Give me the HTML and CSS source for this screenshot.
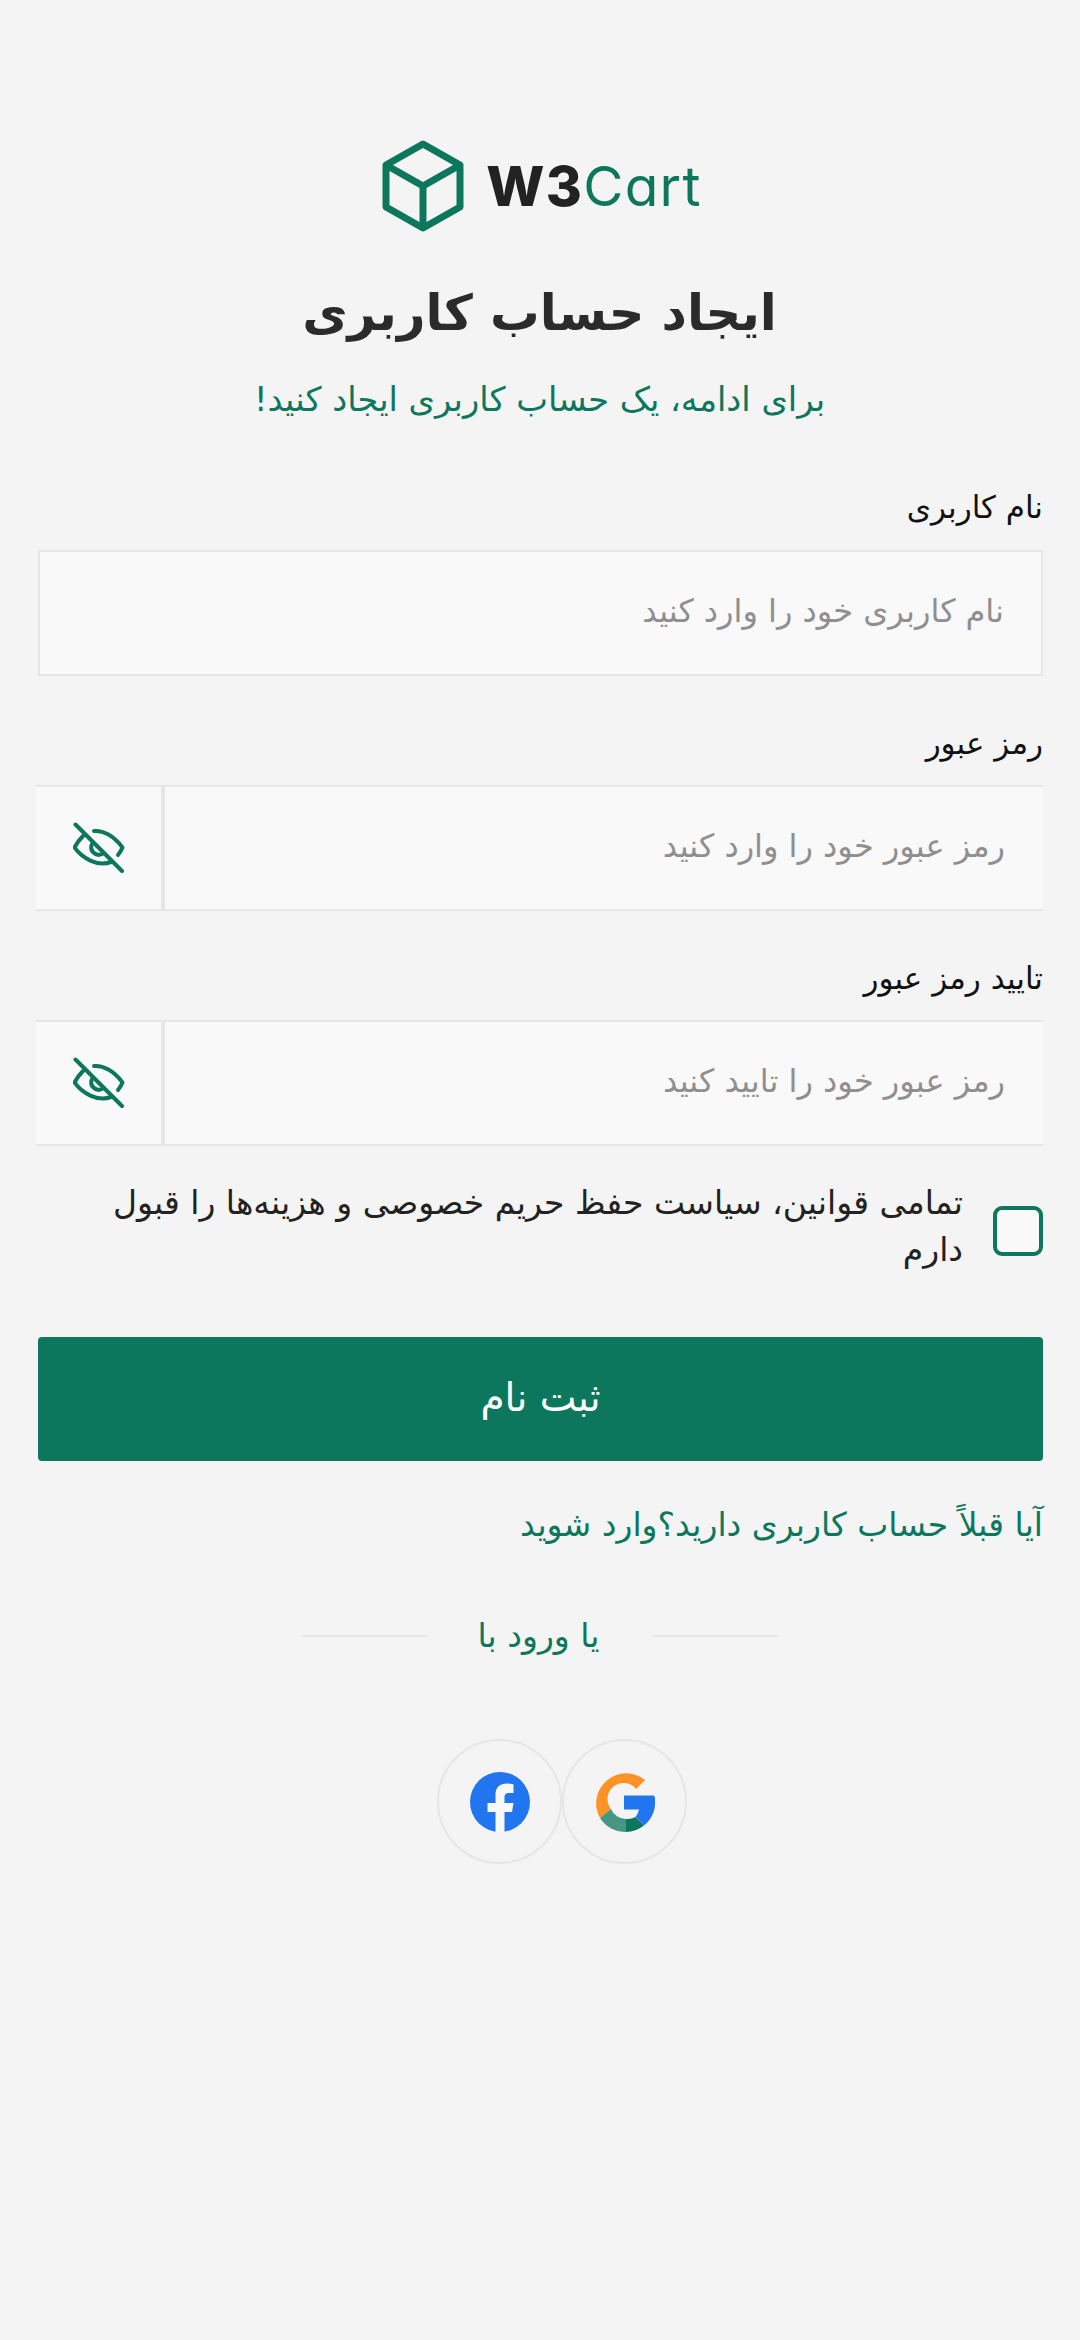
FILE: index.html
```html
<!DOCTYPE html>
<html lang="fa" dir="rtl">
<head>
    <meta charset="UTF-8">
    <meta name="viewport" content="width=device-width, initial-scale=1.0">
    <title>ایجاد حساب کاربری</title>
    <link rel="stylesheet" href="styles.css">
</head>
<body>
    <div class="page">
        <div class="logo" dir="ltr">
            <svg class="logo-box" viewBox="0 0 84 92" width="84" height="92">
                <path d="M42 4 L79 25 V67 L42 88 L5 67 V25 Z M5 25 L42 46 L79 25 M42 46 V88" fill="none" stroke="#0d775d" stroke-width="7" stroke-linejoin="round"/>
            </svg>
            <span class="logo-text"><b>W3</b>Cart</span>
        </div>

        <h1>ایجاد حساب کاربری</h1>
        <p class="subtitle">برای ادامه، یک حساب کاربری ایجاد کنید!</p>

        <label class="field-label first">نام کاربری</label>
        <input class="input solo" type="text" placeholder="نام کاربری خود را وارد کنید">

        <label class="field-label">رمز عبور</label>
        <div class="input-group">
            <input class="input" type="password" placeholder="رمز عبور خود را وارد کنید">
            <button class="eye-btn" type="button">
                <svg viewBox="0 0 52 52" width="52" height="52" fill="none" stroke="#0d775d" stroke-width="4" stroke-linecap="round" stroke-linejoin="round">
                    <path d="M21 9 C30 8 41 14 49.5 25.5 C48.5 28 47 30.5 45 33"/>
                    <path d="M10 14 C7 17 4 21 1.5 25.5 C9 36 24 45 38 40"/>
                    <path d="M19 22 A7.5 7.5 0 0 0 29 32"/>
                    <path d="M2.5 2.5 L49 49"/>
                </svg>
            </button>
        </div>

        <label class="field-label">تایید رمز عبور</label>
        <div class="input-group">
            <input class="input" type="password" placeholder="رمز عبور خود را تایید کنید">
            <button class="eye-btn" type="button">
                <svg viewBox="0 0 52 52" width="52" height="52" fill="none" stroke="#0d775d" stroke-width="4" stroke-linecap="round" stroke-linejoin="round">
                    <path d="M21 9 C30 8 41 14 49.5 25.5 C48.5 28 47 30.5 45 33"/>
                    <path d="M10 14 C7 17 4 21 1.5 25.5 C9 36 24 45 38 40"/>
                    <path d="M19 22 A7.5 7.5 0 0 0 29 32"/>
                    <path d="M2.5 2.5 L49 49"/>
                </svg>
            </button>
        </div>

        <div class="terms">
            <span class="checkbox"></span>
            <span class="terms-text">تمامی قوانین، سیاست حفظ حریم خصوصی و هزینه‌ها را قبول دارم</span>
        </div>

        <button class="submit" type="button">ثبت نام</button>

        <p class="login-link">آیا قبلاً حساب کاربری دارید؟وارد شوید</p>

        <div class="divider"><span>یا ورود با</span></div>

        <div class="socials">
            <div class="social">
                <svg viewBox="0 0 60 60" width="60" height="60">
                    <path d="M50 8 A30 30 0 0 0 5 46 L16 37 A15.5 15.5 0 0 1 41 17 Z" fill="#fd9326"/>
                    <path d="M5 46 A30 30 0 0 0 31 60 V47 A16 16 0 0 1 16 37 Z" fill="#459685"/>
                    <path d="M31 60 A30 30 0 0 0 49 53.5 L40.5 45 A16 16 0 0 1 31 47 Z" fill="#0d775d"/>
                    <path d="M29 23.5 H58 Q60 23.5 60 27 A30 30 0 0 1 49 53.5 L40.5 45 Q43 42 44 37.5 H29 Z" fill="#2176f0"/>
                </svg>
            </div>
            <div class="social">
                <svg viewBox="0 0 60 60" width="60" height="60">
                    <circle cx="30" cy="30" r="30" fill="#2176f0"/>
                    <path d="M25.5 60 V40 H17.5 V31 H25.5 V23 C25.5 15 30 11.5 37 11.5 C40 11.5 43.5 12.5 43.5 12.5 V21 H39 C35.5 21 34.5 23 34.5 25 V31 H43.5 L42 40 H34.5 V60 Z" fill="#f8f8f8"/>
                </svg>
            </div>
        </div>
    </div>
</body>
</html>
```

FILE: styles.css
```css
* {
    box-sizing: border-box;
}
html, body {
    margin: 0;
    background: #f4f4f4;
}
body {
    font-family: "DejaVu Sans", sans-serif;
    color: #222;
}
.page {
    display: flex;
    flex-direction: column;
    padding: 140px 37px 0 36px;
    height: 2340px;
}
.logo {
    display: flex;
    align-items: center;
    justify-content: center;
    gap: 21px;
    height: 92px;
    padding-left: 4px;
}
.logo-text {
    font-family: "Inter", sans-serif;
    font-size: 55px;
    letter-spacing: 1.3px;
    color: #0d775d;
    font-feature-settings: "cv11";
}
.logo-text b {
    color: #222;
    font-weight: 800;
}
h1 {
    margin: 46px 0 0;
    font-size: 49.5px;
    line-height: 70px;
    font-weight: 700;
    text-align: center;
    color: #2b2b2b;
}
.subtitle {
    margin: 30px 0 0;
    font-size: 33.7px;
    line-height: 44px;
    text-align: center;
    color: #0d775d;
}
.field-label {
    display: block;
    margin: 45px 0 20px;
    font-size: 31px;
    line-height: 44px;
    color: #111;
}
.field-label.first {
    margin-top: 63px;
    margin-bottom: 21px;
}
.input {
    flex: 1;
    min-width: 0;
    height: 100%;
    border: 0;
    padding: 0 38px 4px;
    background: #f9f9f9;
    font-family: inherit;
    font-size: 32px;
    outline: none;
}
.input::placeholder {
    color: #8f8f8f;
    opacity: 1;
}
.input.solo {
    flex: none;
    height: 126px;
    margin-left: 2px;
    padding: 0 37px 4px;
    border: 2px solid #e6e6e6;
}
.input-group {
    display: flex;
    height: 126px;
    border-top: 2px solid #e6e6e6;
    border-bottom: 2px solid #e6e6e6;
    background: #f9f9f9;
}
.eye-btn {
    display: flex;
    align-items: center;
    justify-content: center;
    width: 129px;
    border: 0;
    border-right: 4px solid #e6e6e6;
    background: #f9f9f9;
    padding: 0;
}
.terms {
    display: flex;
    align-items: center;
    gap: 30px;
    margin-top: 33px;
    padding-left: 40px;
}
.checkbox {
    flex: none;
    width: 50px;
    height: 50px;
    margin-top: 10px;
    border: 4px solid #0d775d;
    border-radius: 9px;
    background: #f9f9f9;
}
.terms-text {
    font-size: 33px;
    line-height: 47px;
    color: #222;
}
.submit {
    height: 124px;
    margin: 64px 0 0 2px;
    padding: 0 0 4px;
    border: 0;
    border-radius: 4px;
    background: #0d775d;
    color: #fff;
    font-family: inherit;
    font-size: 39px;
}
.login-link {
    margin: 42px 0 0;
    font-size: 33px;
    line-height: 44px;
    color: #0d775d;
}
.divider {
    display: flex;
    align-items: center;
    justify-content: center;
    gap: 53px;
    margin-top: 67px;
    font-size: 33px;
    line-height: 44px;
    color: #0d775d;
}
.divider span {
    width: 120px;
    white-space: nowrap;
    text-align: center;
}
.divider::before, .divider::after {
    content: "";
    width: 125px;
    border-top: 2px solid #e6e6e6;
}
.socials {
    display: flex;
    justify-content: center;
    margin-top: 81px;
    padding-left: 45px;
}
.social {
    display: flex;
    align-items: center;
    justify-content: center;
    width: 125px;
    height: 125px;
    border: 2px solid #e6e6e6;
    border-radius: 50%;
}
```
